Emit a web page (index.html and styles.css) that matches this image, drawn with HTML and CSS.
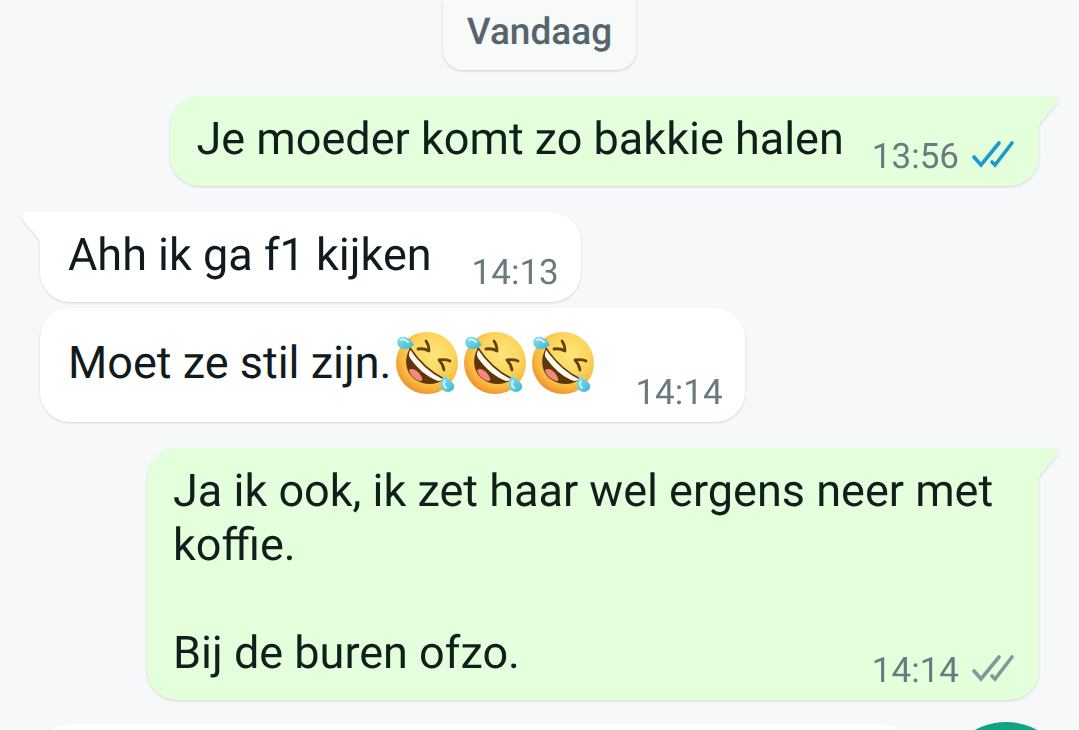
FILE: index.html
```
<!DOCTYPE html>
<html lang="nl">
<head>
<meta charset="utf-8">
<meta name="viewport" content="width=device-width, initial-scale=1">
<title>Chat</title>
<link rel="stylesheet" href="styles.css">
</head>
<body>
<svg class="defs" aria-hidden="true">
  <defs>
    <radialGradient id="face" cx="60%" cy="36%" r="66%">
      <stop offset="0" stop-color="#fde67c"/>
      <stop offset=".5" stop-color="#fbd55c"/>
      <stop offset=".82" stop-color="#fab63c"/>
      <stop offset="1" stop-color="#ee932f"/>
    </radialGradient>
    <linearGradient id="tear" x1="0" y1="0" x2="1" y2="1">
      <stop offset="0" stop-color="#8fe3f0"/>
      <stop offset="1" stop-color="#3bb4d2"/>
    </linearGradient>
    <symbol id="rofl" viewBox="0 0 64 64">
      <circle cx="32" cy="32" r="31" fill="url(#face)"/>
      <path d="M15 17C8 29 11 43 21 49C30 55 42 54 49 48C35 42 24 32 15 17Z" fill="#5f3609"/>
      <path d="M14 39C18 36 24 40 27 47C28 49 27 50 25 50C19 48 15 44 14 39Z" fill="#f4877f"/>
      <path d="M16 18C14 21 13 24 15 27C23 38 32 46 43 50C46 50 48 49 49 47C35 41 25 31 16 18Z" fill="#fffaf0"/>
      <path d="M15 17C24 31 35 41 49 48" fill="none" stroke="#5f3609" stroke-width="1.6" stroke-linecap="round"/>
      <path d="M31 10Q34 14 34 20Q29 17 23 18M55 30Q50 28 44 29Q48 33 49 39" fill="none" stroke="#68400d" stroke-width="2.8" stroke-linecap="round" stroke-linejoin="round"/>
      <path d="M19 14C15 6 8 4 4 7C0 11 3 18 9 18C13 19 15 16 19 14Z" fill="url(#tear)"/>
      <path d="M6 9C9 7 11 9 13 11" fill="none" stroke="#d3f7fb" stroke-width="2" stroke-linecap="round"/>
      <path d="M49 44C46 50 45 54 47 58C50 62 57 62 59 57C61 52 53 49 49 44Z" fill="url(#tear)"/>
      <path d="M50 50C48 53 49 55 51 57" fill="none" stroke="#c5f4fa" stroke-width="2" stroke-linecap="round"/>
    </symbol>
    <symbol id="ticks" viewBox="0 0 44 32">
      <path d="M3 18L10 26L28 4M21 23L24 26L41 4" fill="none" stroke="currentColor" stroke-width="3.6" stroke-linecap="round" stroke-linejoin="miter"/>
    </symbol>
    <symbol id="tail" viewBox="0 0 20 30">
      <path d="M0 0H15Q21 1 18 7L1 27V30H0Z" fill="currentColor"/>
    </symbol>
  </defs>
</svg>

<main class="chat">
  <div class="day">Vandaag</div>

  <article class="bubble out first">
    <svg class="tail" aria-hidden="true"><use href="#tail"/></svg>
    <p class="text">Je moeder komt zo bakkie halen</p>
    <div class="meta"><time>13:56</time><svg class="ticks read" role="img" aria-label="Gelezen"><use href="#ticks"/></svg></div>
  </article>

  <article class="bubble in first">
    <svg class="tail" aria-hidden="true"><use href="#tail"/></svg>
    <p class="text">Ahh ik ga f1 kijken</p>
    <div class="meta"><time>14:13</time></div>
  </article>

  <article class="bubble in">
    <p class="text with-emoji">Moet ze stil zijn.<span class="emojis" role="img" aria-label="Drie keer rollend van het lachen"><svg class="emoji"><use href="#rofl"/></svg><svg class="emoji"><use href="#rofl"/></svg><svg class="emoji"><use href="#rofl"/></svg></span></p>
    <div class="meta"><time>14:14</time></div>
  </article>

  <article class="bubble out first long">
    <svg class="tail" aria-hidden="true"><use href="#tail"/></svg>
    <p class="text">Ja ik ook, ik zet haar wel ergens neer met koffie.<br><br>Bij de buren ofzo.</p>
    <div class="meta"><time>14:14</time><svg class="ticks" role="img" aria-label="Afgeleverd"><use href="#ticks"/></svg></div>
  </article>

  <article class="bubble in next"></article>
</main>
<button class="fab" type="button" aria-label="Spraakbericht"></button>
</body>
</html>
```
FILE: styles.css
```
* {
  box-sizing: border-box;
}

body {
  margin: 0;
  height: 100vh;
  overflow: hidden;
  background: #f6f8fa;
  color: #101b20;
  font-family: Roboto, "Liberation Sans", sans-serif;
  text-rendering: geometricPrecision;
}

.defs {
  position: absolute;
  width: 0;
  height: 0;
}

.chat {
  display: flex;
  flex-direction: column;
  height: 100%;
  overflow: hidden;
  padding: 0 40px;
}

.chat > * {
  flex-shrink: 0;
}

.day {
  align-self: center;
  padding: 10px 24px 14px;
  border-radius: 0 0 20px 20px;
  background: #f8f9f9;
  box-shadow: 0 1px 3px rgba(0, 0, 0, 0.16);
  color: #55656d;
  font-size: 37px;
  font-weight: 500;
  line-height: 46px;
}

.bubble {
  position: relative;
  display: flex;
  align-items: flex-end;
  max-width: 892px;
  margin-top: 6px;
  padding: 16px 24px 20px 28px;
  border-radius: 30px;
  filter: drop-shadow(0 1px 1px rgba(0, 0, 0, 0.14));
}

.first {
  margin-top: 26px;
}

.out {
  align-self: flex-end;
  padding-left: 26px;
  background: #e4ffdb;
  color: #101f1c;
}

.in {
  align-self: flex-start;
  padding-right: 22px;
  background: #fff;
}

.out.first {
  border-top-right-radius: 0;
}

.in.first {
  border-top-left-radius: 0;
}

.tail {
  position: absolute;
  top: 0;
  left: 100%;
  width: 20px;
  height: 30px;
  color: #e4ffdb;
}

.in .tail {
  right: 100%;
  left: auto;
  color: #fff;
  transform: scaleX(-1);
}

.text {
  margin: 0;
  font-size: 45px;
  line-height: 54px;
}

.meta {
  display: flex;
  gap: 12px;
  align-items: center;
  margin-bottom: -12px;
  margin-left: 28px;
  color: #6a7b80;
  font-size: 35px;
  line-height: 42px;
}

.in .meta {
  margin-left: 40px;
}

.ticks {
  width: 44px;
  height: 32px;
  margin-bottom: 4px;
  color: #87969a;
}

.read {
  color: #1c9bcb;
}

.with-emoji {
  display: flex;
  align-items: center;
  line-height: 78px;
}

.emojis {
  display: flex;
  gap: 4px;
  padding-left: 4px;
}

.emoji {
  width: 64px;
  height: 64px;
}

.long {
  display: grid;
}

.long .text,
.long .meta {
  grid-area: 1 / 1;
}

.long .meta {
  align-self: end;
  justify-self: end;
}

.next {
  width: 872px;
  height: 90px;
  margin-top: 24px;
}

.fab {
  position: fixed;
  right: 9px;
  bottom: -120px;
  width: 128px;
  height: 128px;
  border: 0;
  border-radius: 50%;
  background: #10a57f;
}
```
